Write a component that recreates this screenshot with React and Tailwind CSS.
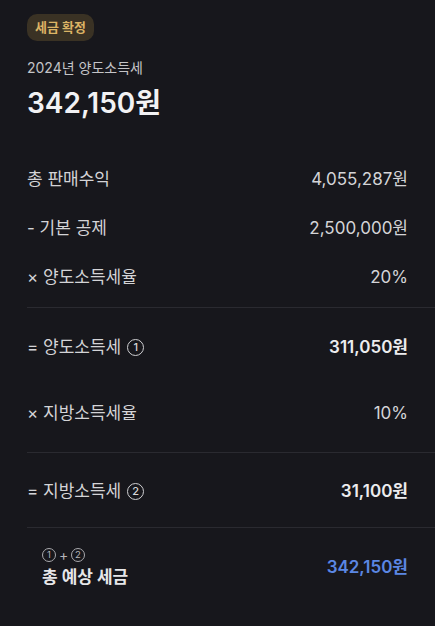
import React from 'react';

const Circled = ({ n, size = 'md' }) => (
  <span
    className={
      size === 'md'
        ? 'inline-flex items-center justify-center shrink-0 w-[17px] h-[17px] rounded-full border-[1.5px] border-[#cfcfd2] text-[11px] leading-none font-medium text-[#d6d6d8]'
        : 'inline-flex items-center justify-center shrink-0 w-[14px] h-[14px] rounded-full border border-[#a9a9ad] text-[9.5px] leading-none text-[#b4b4b8]'
    }
  >
    {n}
  </span>
);

const Row = ({ label, value, bold, circle }) => (
  <div className="flex items-center justify-between h-[49px] pr-[27px]">
    <div className="flex items-center gap-[6px] text-[17px] text-[#d4d4d7]">
      <span>{label}</span>
      {circle && <Circled n={circle} />}
    </div>
    <span className={bold ? 'text-[17px] font-semibold text-[#ececee]' : 'text-[17px] text-[#d4d4d7]'}>
      {value}
    </span>
  </div>
);

const App = () => {
  return (
    <div className="min-h-screen bg-[#17171c] font-['Inter','Noto_Sans_CJK_KR',sans-serif]">
      {/* Header */}
      <div className="px-[27px] pt-[14px]">
        <span className="inline-flex items-center h-[27px] px-[8px] rounded-[10px] bg-[#3a3224] text-[13px] font-bold text-[#dcb465]">
          세금 확정
        </span>
        <div className="mt-[17px] text-[14px] leading-[20px] text-[#c4c4c7]">2024년 양도소득세</div>
        <div className="mt-[7px] text-[28px] leading-[36px] font-semibold text-[#f2f2f4]">342,150원</div>
      </div>

      {/* Breakdown */}
      <div className="pl-[27px] mt-[34px]">
        <div className="pb-[5px]">
          <Row label="총 판매수익" value="4,055,287원" />
          <Row label="- 기본 공제" value="2,500,000원" />
          <Row label="× 양도소득세율" value="20%" />
        </div>

        <div className="border-t border-[#2a2a30] pt-[15px] pb-[14px] flex flex-col gap-[16.5px]">
          <Row label="= 양도소득세" value="311,050원" bold circle="1" />
          <Row label="× 지방소득세율" value="10%" />
        </div>

        <div className="border-t border-[#2a2a30] pt-[14px] pb-[11px]">
          <Row label="= 지방소득세" value="31,100원" bold circle="2" />
        </div>

        <div className="border-t border-[#2a2a30] pt-[19px] pl-[15px] pr-[27px] flex items-center justify-between">
          <div className="flex flex-col">
            <div className="flex items-center gap-[3px] h-[16px] text-[14px] text-[#b4b4b8]">
              <Circled n="1" size="sm" />
              <span className="leading-none w-[9px] text-center">+</span>
              <Circled n="2" size="sm" />
            </div>
            <div className="mt-[2px] text-[17px] leading-[24px] font-bold text-[#e6e6e8]">총 예상 세금</div>
          </div>
          <span className="text-[17px] font-semibold text-[#5b87e4]">342,150원</span>
        </div>
      </div>
    </div>
  );
};

export default App;
